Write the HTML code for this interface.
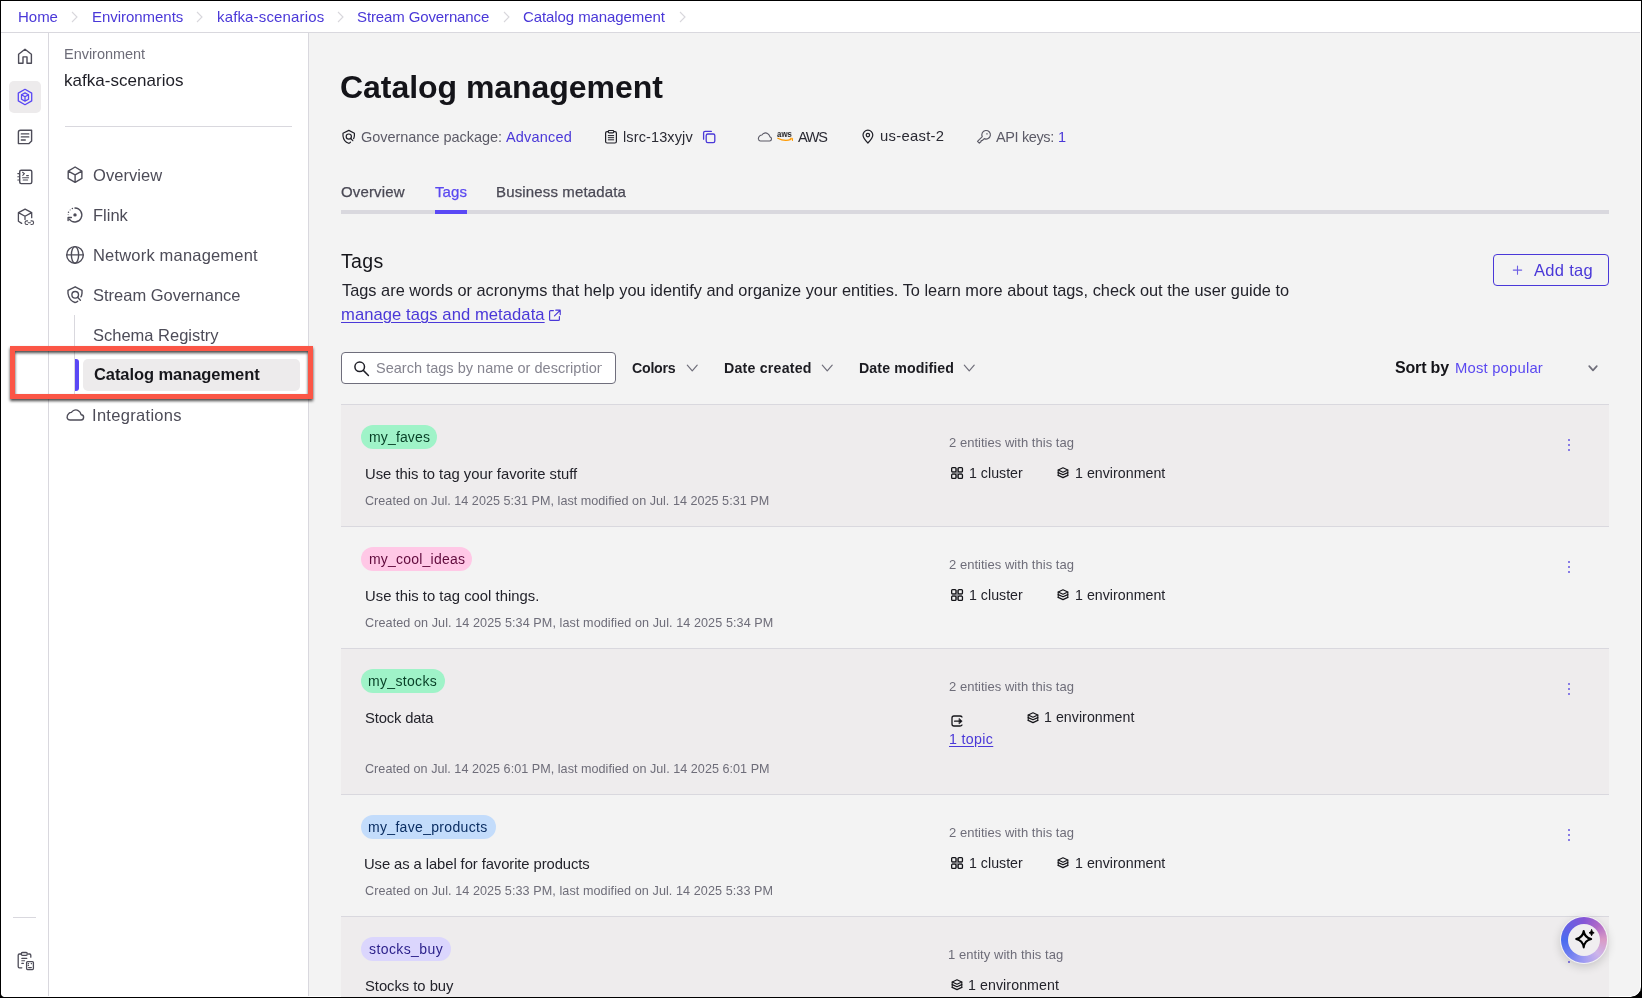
<!DOCTYPE html>
<html><head><meta charset="utf-8"><style>
*{box-sizing:border-box;margin:0;padding:0}
html,body{width:1642px;height:998px;overflow:hidden;background:#000}
body{font-family:"Liberation Sans",sans-serif;position:relative}
.t{position:absolute;white-space:nowrap;will-change:transform}
.b{position:absolute}
svg{position:absolute;overflow:visible}
</style></head><body>
<div class="b" style="left:1px;top:1px;width:1640px;height:996px;background:#fff;border-radius:0 0 10px 3px;overflow:hidden"></div><div class="b" style="left:309px;top:33px;width:1331px;height:963px;background:#f3f3f3;border-bottom-right-radius:9px"></div><div class="b" style="left:1px;top:32px;width:1639px;height:1px;background:#d9d8de"></div><div class="b" style="left:48px;top:33px;width:1px;height:963px;background:#d9d8de"></div><div class="b" style="left:308px;top:33px;width:1px;height:963px;background:#d9d8de"></div><div class="t" style="left:18.25px;top:8.62px;font-size:15px;line-height:16.755px;color:#4a38d8;font-weight:400;letter-spacing:-0.017px;">Home</div>
<div class="t" style="left:91.55px;top:8.62px;font-size:15px;line-height:16.755px;color:#4a38d8;font-weight:400;letter-spacing:-0.036px;">Environments</div>
<div class="t" style="left:216.50px;top:8.62px;font-size:15px;line-height:16.755px;color:#4a38d8;font-weight:400;letter-spacing:0.150px;">kafka-scenarios</div>
<div class="t" style="left:357.45px;top:8.62px;font-size:15px;line-height:16.755px;color:#4a38d8;font-weight:400;letter-spacing:-0.122px;">Stream Governance</div>
<div class="t" style="left:523.45px;top:8.62px;font-size:15px;line-height:16.755px;color:#4a38d8;font-weight:400;letter-spacing:-0.088px;">Catalog management</div>
<svg style="left:71px;top:11.2px" width="7" height="12" viewBox="0 0 7 12"><path d="M1 1 L6 6 L1 11" fill="none" stroke="#d8d7dc" stroke-width="1.1"/></svg><svg style="left:196px;top:11.2px" width="7" height="12" viewBox="0 0 7 12"><path d="M1 1 L6 6 L1 11" fill="none" stroke="#d8d7dc" stroke-width="1.1"/></svg><svg style="left:337px;top:11.2px" width="7" height="12" viewBox="0 0 7 12"><path d="M1 1 L6 6 L1 11" fill="none" stroke="#d8d7dc" stroke-width="1.1"/></svg><svg style="left:503px;top:11.2px" width="7" height="12" viewBox="0 0 7 12"><path d="M1 1 L6 6 L1 11" fill="none" stroke="#d8d7dc" stroke-width="1.1"/></svg><svg style="left:679px;top:11.2px" width="7" height="12" viewBox="0 0 7 12"><path d="M1 1 L6 6 L1 11" fill="none" stroke="#d8d7dc" stroke-width="1.1"/></svg><div class="b" style="left:9px;top:81px;width:32px;height:32px;border-radius:5px;background:#edebec"></div><svg style="left:10px;top:40px" width="30" height="30" viewBox="10 40 30 30" fill="none" stroke-linecap="round" stroke-linejoin="round"><path d="M18.6 63.2 V54.3 L25 49.2 L31.4 54.3 V63.2 H27 V56.9 H23 V63.2 Z" stroke="#4d4c58" stroke-width="1.4"/></svg>
<svg style="left:10px;top:82px" width="30" height="30" viewBox="10 82 30 30" fill="none" stroke-linecap="round" stroke-linejoin="round"><path d="M25 89.3 L31.7 93.1 V100.9 L25 104.7 L18.3 100.9 V93.1 Z" stroke="#5a48f5" stroke-width="1.3"/><path d="M25 92.9 L28.5 94.8 V99.2 L25 101.1 L21.5 99.2 V94.8 Z M21.5 94.8 L25 96.8 L28.5 94.8 M25 96.8 V101" stroke="#5a48f5" stroke-width="1.3"/></svg>
<svg style="left:10px;top:120px" width="30" height="30" viewBox="10 120 30 30" fill="none" stroke-linecap="round" stroke-linejoin="round"><path d="M20.5 130.2 H31.6 V141 L29 143.6 H18.4 V132.3 Q18.4 130.2 20.5 130.2 Z" stroke="#4d4c58" stroke-width="1.4"/><path d="M21.3 133.9 H28.8 M21.3 136.9 H28.8 M21.3 140 H25.3" stroke="#4d4c58" stroke-width="1.3"/></svg>
<svg style="left:10px;top:160px" width="30" height="30" viewBox="10 160 30 30" fill="none" stroke-linecap="round" stroke-linejoin="round"><rect x="19.7" y="170.2" width="12.1" height="13.4" rx="1.5" stroke="#4d4c58" stroke-width="1.4"/><path d="M17.8 173.6 H19.6 M17.8 176.8 H19.6 M17.8 180 H19.6" stroke="#4d4c58" stroke-width="1.1"/><path d="M22.6 172.3 L24.4 173.7 L22.8 175.3 M26.6 175.6 H28.4 M22.6 177.7 H28.6 M23.2 180 H27.6" stroke="#4d4c58" stroke-width="1.1"/></svg>
<svg style="left:10px;top:200px" width="30" height="30" viewBox="10 200 30 30" fill="none" stroke-linecap="round" stroke-linejoin="round"><path d="M18.4 212.6 L25.1 209.2 L31.7 212.6 L25 216.2 Z M18.4 212.6 V221.3 L21.7 223.4 M25 216.2 V219.4 M31.7 212.6 V217.7" stroke="#4d4c58" stroke-width="1.3"/><path d="M27.6 220.9 H26.8 A1.8 1.8 0 0 0 26.8 224.5 H27.6 M31 220.9 H31.8 A1.8 1.8 0 0 1 31.8 224.5 H31 M28.2 222.7 H30.4" stroke="#4d4c58" stroke-width="1.1"/></svg>
<div class="b" style="left:13px;top:917px;width:23px;height:1px;background:#d9d8de"></div><svg style="left:10px;top:945px" width="30" height="30" viewBox="10 945 30 30" fill="none" stroke-linecap="round" stroke-linejoin="round"><path d="M21.2 954 H19.4 Q18.2 954 18.2 955.3 V966.6 Q18.2 967.8 19.4 967.8 H21.8 M28.5 954 H29.6 Q30.8 954 30.8 955.3 V957.2" stroke="#4d4c58" stroke-width="1.3"/><rect x="21.3" y="952.5" width="6" height="2.8" rx="1.2" stroke="#4d4c58" stroke-width="1.3"/><path d="M21.8 958.4 H26.8 M21.8 960.8 H24.6 M21.8 963.4 H23.4" stroke="#4d4c58" stroke-width="1.1"/><rect x="26.6" y="961.6" width="6.8" height="8" rx="1" stroke="#4d4c58" stroke-width="1.3"/><path d="M28.2 963.6 H28.6 M31.2 963.6 H31.6 M28.2 965.4 H28.6 M28.6 967.6 H31.4" stroke="#4d4c58" stroke-width="1.1"/></svg>
<div class="t" style="left:64.15px;top:45.88px;font-size:14.5px;line-height:16.197px;color:#6e6d79;font-weight:400;letter-spacing:-0.030px;">Environment</div>
<div class="t" style="left:64.40px;top:71.11px;font-size:17px;line-height:18.989px;color:#1f1f27;font-weight:400;letter-spacing:0.029px;">kafka-scenarios</div>
<div class="b" style="left:65px;top:126px;width:227px;height:1px;background:#d9d8de"></div><div class="t" style="left:93.05px;top:165.87px;font-size:16.5px;line-height:18.430px;color:#4d4c58;font-weight:400;letter-spacing:0.043px;">Overview</div>
<div class="t" style="left:93.30px;top:205.87px;font-size:16.5px;line-height:18.430px;color:#4d4c58;font-weight:400;">Flink</div>
<div class="t" style="left:92.55px;top:245.87px;font-size:16.5px;line-height:18.430px;color:#4d4c58;font-weight:400;letter-spacing:0.188px;">Network management</div>
<div class="t" style="left:93.05px;top:285.77px;font-size:16.5px;line-height:18.430px;color:#4d4c58;font-weight:400;letter-spacing:-0.009px;">Stream Governance</div>
<div class="t" style="left:93.05px;top:325.67px;font-size:16.5px;line-height:18.430px;color:#4d4c58;font-weight:400;letter-spacing:-0.004px;">Schema Registry</div>
<div class="t" style="left:92.30px;top:405.57px;font-size:16.5px;line-height:18.430px;color:#4d4c58;font-weight:400;letter-spacing:0.305px;">Integrations</div>
<div class="b" style="left:74px;top:315px;width:1px;height:79px;background:#d9d8de"></div><div class="b" style="left:83px;top:359px;width:217px;height:31.5px;border-radius:5px;background:#edebec"></div><div class="b" style="left:74.5px;top:359px;width:4.5px;height:31.5px;border-radius:0 3px 3px 0;background:#5a48f5"></div><div class="t" style="left:93.55px;top:365.07px;font-size:16.5px;line-height:18.430px;color:#17171c;font-weight:700;letter-spacing:-0.071px;">Catalog management</div>
<svg style="left:60px;top:160px" width="30" height="30" viewBox="60 160 30 30" fill="none" stroke-linecap="round" stroke-linejoin="round"><path d="M75.1 167 L81.9 171.2 V178.4 L75.1 182.4 L68.2 178.4 V171.2 Z M68.2 171.2 L75.1 174.8 L81.9 171.2 M75.1 174.8 V182.3" stroke="#4d4c58" stroke-width="1.4"/></svg>
<svg style="left:60px;top:200px" width="30" height="30" viewBox="60 200 30 30" fill="none" stroke-linecap="round" stroke-linejoin="round"><path d="M75 208 A7 7 0 1 1 69.2 219.2" stroke="#4d4c58" stroke-width="1.4"/><path d="M68.1 217.5 H71.4 M68.1 217.5 V220.6" stroke="#4d4c58" stroke-width="1.4"/><circle cx="75" cy="214.9" r="1.7" fill="#4d4c58" stroke="none"/><circle cx="72.4" cy="208.4" r="0.75" fill="#4d4c58" stroke="none"/><circle cx="70.2" cy="209.9" r="0.7" fill="#4d4c58" stroke="none" opacity=".6"/><circle cx="68.5" cy="212.3" r="0.75" fill="#4d4c58" stroke="none"/><circle cx="68.2" cy="214.6" r="0.7" fill="#4d4c58" stroke="none" opacity=".6"/></svg>
<svg style="left:60px;top:240px" width="30" height="30" viewBox="60 240 30 30" fill="none" stroke-linecap="round" stroke-linejoin="round"><circle cx="75" cy="254.9" r="8.3" stroke="#4d4c58" stroke-width="1.4"/><ellipse cx="75" cy="254.9" rx="3.6" ry="8.3" stroke="#4d4c58" stroke-width="1.4"/><path d="M66.8 254.9 H83.2" stroke="#4d4c58" stroke-width="1.4"/></svg>
<svg style="left:60px;top:280px" width="30" height="30" viewBox="60 280 30 30" fill="none" stroke-linecap="round" stroke-linejoin="round"><path d="M77.7 301.2 Q76.6 302.4 75 302.5 Q69 300.5 68 293.5 V290.3 L75.2 286.8 L82 290.3 V293.2 Q81.8 295.6 80.9 296.8" stroke="#4d4c58" stroke-width="1.4"/><circle cx="75.2" cy="294.8" r="3.3" stroke="#4d4c58" stroke-width="1.4"/><path d="M77.6 297.3 L80.4 300.2" stroke="#4d4c58" stroke-width="1.4"/></svg>
<svg style="left:60px;top:400px" width="30" height="30" viewBox="60 400 30 30" fill="none" stroke-linecap="round" stroke-linejoin="round"><path d="M70.2 420 H80.8 A2.6 2.6 0 0 0 81.2 414.8 Q80.3 411.6 78.2 410.6 Q76 409.2 73.5 410.5 Q72.3 411.3 71.4 412.4 Q69.8 412.4 68.8 413.5 Q66.8 415.3 67.1 417.6 Q67.7 420 70.2 420 Z" stroke="#4d4c58" stroke-width="1.4"/></svg>
<div class="b" style="left:10.4px;top:345.8px;width:302.6px;height:53.2px;border:5.1px solid #fb5646;filter:drop-shadow(0 2.8px 1.5px rgba(0,0,0,.72))"></div><div class="t" style="left:340.45px;top:69.84px;font-size:32px;line-height:35.744px;color:#141419;font-weight:700;letter-spacing:-0.041px;">Catalog management</div>
<svg style="left:338px;top:126px" width="20" height="20" viewBox="338 126 20 20" fill="none" stroke-linecap="round" stroke-linejoin="round"><path d="M350.5 142.2 Q349.7 143.3 348.7 143.3 Q343.6 141.6 343 136 V133.2 L348.8 130.4 L354.4 133.2 V135.8 Q354.2 137.6 353.6 138.6" stroke="#1f1f27" stroke-width="1.2"/><circle cx="348.8" cy="136.6" r="2.6" stroke="#1f1f27" stroke-width="1.2"/><path d="M350.7 138.5 L352.8 140.7" stroke="#1f1f27" stroke-width="1.2"/></svg>
<div class="t" style="left:360.85px;top:128.68px;font-size:14.5px;line-height:16.197px;color:#5c5b67;font-weight:400;letter-spacing:-0.042px;">Governance package:</div>
<div class="t" style="left:505.70px;top:128.68px;font-size:14.5px;line-height:16.197px;color:#4a38d8;font-weight:400;letter-spacing:0.186px;">Advanced</div>
<svg style="left:600px;top:126px" width="20" height="20" viewBox="600 126 20 20" fill="none" stroke-linecap="round" stroke-linejoin="round"><rect x="605.6" y="131.6" width="10.8" height="11.4" rx="1.5" stroke="#1f1f27" stroke-width="1.2"/><rect x="608.3" y="130.5" width="5.4" height="2.4" rx=".8" fill="#f3f3f3" stroke="#1f1f27" stroke-width="1.1"/><path d="M608.3 135.6 H613.7 M608.3 137.7 H613.7 M608.3 139.8 H613.7" stroke="#1f1f27" stroke-width="1"/></svg>
<div class="t" style="left:623.00px;top:128.68px;font-size:14.5px;line-height:16.197px;color:#2a2a33;font-weight:400;letter-spacing:0.120px;">lsrc-13xyjv</div>
<svg style="left:700px;top:126px" width="20" height="20" viewBox="700 126 20 20" fill="none" stroke-linecap="round" stroke-linejoin="round"><rect x="706.2" y="134" width="8.6" height="8.6" rx="1.6" stroke="#4a38d8" stroke-width="1.3"/><path d="M703.6 139.2 V132.8 Q703.6 131.3 705.1 131.3 H711.4" stroke="#4a38d8" stroke-width="1.3"/></svg>
<svg style="left:752px;top:126px" width="25" height="20" viewBox="752 126 25 20" fill="none" stroke-linecap="round" stroke-linejoin="round"><path d="M760.4 141 H769.6 A2.1 2.1 0 0 0 770 136.9 Q769.3 134.4 767.5 133.5 Q765.6 132.4 763.6 133.4 Q762.6 134.1 761.9 135 Q760.6 135 759.7 135.9 Q758.1 137.4 758.4 139.2 Q758.9 141 760.4 141 Z" stroke="#5c5b67" stroke-width="1.1"/></svg>
<div class="t" style="left:777px;top:129px;font-size:9.8px;line-height:10px;color:#1b1b1f;font-weight:700;transform:scaleX(.8);transform-origin:0 0">aws</div><svg style="left:776px;top:136px" width="20" height="8" viewBox="776 136 20 8" fill="none" stroke-linecap="round" stroke-linejoin="round"><path d="M777.8 138.2 Q784.5 141.8 791 139.4" stroke="#ff9a00" stroke-width="1.2"/><path d="M790.2 138.3 L792.6 138.3 L792.4 140.6" stroke="#ff9a00" stroke-width="1"/></svg>
<div class="t" style="left:798.10px;top:128.68px;font-size:14.5px;line-height:16.197px;color:#2a2a33;font-weight:400;letter-spacing:-1.275px;">AWS</div>
<svg style="left:858px;top:126px" width="20" height="20" viewBox="858 126 20 20" fill="none" stroke-linecap="round" stroke-linejoin="round"><path d="M867.9 143 Q863 138.3 863 135.1 A4.9 4.9 0 0 1 872.8 135.1 Q872.8 138.3 867.9 143 Z" stroke="#1f1f27" stroke-width="1.2"/><circle cx="867.9" cy="135.1" r="1.7" stroke="#1f1f27" stroke-width="1.2"/></svg>
<div class="t" style="left:879.60px;top:128.41px;font-size:14.8px;line-height:16.532px;color:#2a2a33;font-weight:400;letter-spacing:0.300px;">us-east-2</div>
<svg style="left:972px;top:126px" width="22" height="22" viewBox="972 126 22 22" fill="none" stroke-linecap="round" stroke-linejoin="round"><path d="M984.25 138.63 A4.3 4.3 0 1 0 982.27 136.65 L977.5 141.4 L979.3 143.2 L981.1 141.5 L981.2 140.6 L982.3 140.5 Z" stroke="#5c5b67" stroke-width="1.15"/><rect x="986.3" y="133.2" width="1.3" height="1.3" fill="#5c5b67" stroke="none"/></svg>
<div class="t" style="left:996.30px;top:128.68px;font-size:14.5px;line-height:16.197px;color:#5c5b67;font-weight:400;letter-spacing:-0.375px;">API keys:</div>
<div class="t" style="left:1057.90px;top:128.68px;font-size:14.5px;line-height:16.197px;color:#4a38d8;font-weight:400;letter-spacing:0.000px;">1</div>
<div class="t" style="left:340.65px;top:184.43px;font-size:15px;line-height:16.755px;color:#4a4955;font-weight:400;letter-spacing:0.150px;-webkit-text-stroke:.25px #4a4955">Overview</div>
<div class="t" style="left:435.15px;top:184.43px;font-size:15px;line-height:16.755px;color:#5a48f0;font-weight:400;letter-spacing:0.067px;-webkit-text-stroke:.25px #5a48f0">Tags</div>
<div class="t" style="left:496.15px;top:184.43px;font-size:15px;line-height:16.755px;color:#4a4955;font-weight:400;letter-spacing:0.147px;-webkit-text-stroke:.25px #4a4955">Business metadata</div>
<div class="b" style="left:341px;top:210px;width:1268px;height:4px;background:#d9d8de"></div><div class="b" style="left:435px;top:209.6px;width:32.2px;height:4px;background:#5a48f5"></div><div class="t" style="left:341.40px;top:251.15px;font-size:19.5px;line-height:21.782px;color:#141419;font-weight:400;letter-spacing:0.367px;">Tags</div>
<div class="t" style="left:341.65px;top:281.42px;font-size:16.33px;line-height:18.241px;color:#23232b;font-weight:400;letter-spacing:0.012px;">Tags are words or acronyms that help you identify and organize your entities. To learn more about tags, check out the user guide to</div>
<div class="t" style="left:340.50px;top:306.28px;font-size:16.6px;line-height:18.542px;color:#4a38d8;font-weight:400;letter-spacing:0.067px;text-decoration:underline;text-underline-offset:2px;text-decoration-thickness:1px">manage tags and metadata</div>
<svg style="left:546px;top:306px" width="18" height="18" viewBox="546 306 18 18" fill="none" stroke-linecap="round" stroke-linejoin="round"><path d="M553.4 310.6 H550.6 Q549.6 310.6 549.6 311.6 V319.4 Q549.6 320.4 550.6 320.4 H558.4 Q559.4 320.4 559.4 319.4 V316.6 M555.8 310.2 H560.2 V314.6 M560 310.4 L554.5 315.9" stroke="#4a38d8" stroke-width="1.2"/></svg>
<div class="b" style="left:1493px;top:254px;width:116px;height:32px;border:1.3px solid #4a38d8;border-radius:4px"></div><svg style="left:1510px;top:262px" width="16" height="16" viewBox="1510 262 16 16" fill="none" stroke-linecap="round" stroke-linejoin="round"><path d="M1517.5 266 V274.3 M1513.3 270.1 H1521.7" stroke="#6e60e4" stroke-width="1.1"/></svg>
<div class="t" style="left:1534.00px;top:261.07px;font-size:16.5px;line-height:18.430px;color:#4a38d8;font-weight:400;letter-spacing:0.308px;">Add tag</div>
<div class="b" style="left:341px;top:352px;width:275px;height:32px;border:1.2px solid #6f6e7c;border-radius:4px;background:#fff"></div><svg style="left:350px;top:358px" width="22" height="22" viewBox="350 358 22 22" fill="none" stroke-linecap="round" stroke-linejoin="round"><circle cx="359.7" cy="366.8" r="4.8" stroke="#1f1f27" stroke-width="1.5"/><path d="M363.3 370.4 L368.4 375.5" stroke="#1f1f27" stroke-width="1.5"/></svg>
<div class="b" style="left:376px;top:356px;width:225.5px;height:24px;overflow:hidden"><div class="t" style="left:-0.05px;top:4.18px;font-size:14.5px;line-height:16.197px;color:#85848f;font-weight:400;letter-spacing:0.024px;">Search tags by name or description</div>
</div><div class="t" style="left:632.20px;top:361.15px;font-size:14.2px;line-height:15.861px;color:#1c1c22;font-weight:700;letter-spacing:-0.260px;">Colors</div>
<div class="t" style="left:723.80px;top:361.15px;font-size:14.2px;line-height:15.861px;color:#1c1c22;font-weight:700;letter-spacing:0.205px;">Date created</div>
<div class="t" style="left:858.60px;top:361.15px;font-size:14.2px;line-height:15.861px;color:#1c1c22;font-weight:700;letter-spacing:0.100px;">Date modified</div>
<svg style="left:684.8px;top:360px" width="16" height="14" viewBox="684.8 360 16 14" fill="none" stroke-linecap="round" stroke-linejoin="round"><path d="M687.0999999999999 365.2 L692.05 370.8 L697.0 365.2" stroke="#6f6e7a" stroke-width="1.2"/></svg>
<svg style="left:819.9px;top:360px" width="16" height="14" viewBox="819.9 360 16 14" fill="none" stroke-linecap="round" stroke-linejoin="round"><path d="M822.1999999999999 365.2 L827.15 370.8 L832.1 365.2" stroke="#6f6e7a" stroke-width="1.2"/></svg>
<svg style="left:961.7px;top:360px" width="16" height="14" viewBox="961.7 360 16 14" fill="none" stroke-linecap="round" stroke-linejoin="round"><path d="M964.0 365.2 L968.95 370.8 L973.9000000000001 365.2" stroke="#6f6e7a" stroke-width="1.2"/></svg>
<div class="t" style="left:1395.40px;top:359.22px;font-size:16px;line-height:17.872px;color:#141419;font-weight:700;letter-spacing:-0.167px;">Sort by</div>
<div class="t" style="left:1455.15px;top:360.31px;font-size:14.8px;line-height:16.532px;color:#5a48f0;font-weight:400;letter-spacing:0.200px;">Most popular</div>
<svg style="left:1584px;top:360px" width="18" height="14" viewBox="1584 360 18 14" fill="none" stroke-linecap="round" stroke-linejoin="round"><path d="M1589.2 366.2 L1593 370.3 L1596.8 366.2" stroke="#6f6e7a" stroke-width="1.7"/></svg>
<div class="b" style="left:341px;top:404px;width:1268px;height:122px;background:#eeeced;border-top:1px solid #d9d8de"></div><div class="b" style="left:361px;top:425px;width:76px;height:24px;border-radius:12px;background:#9ff3c8"></div><div class="t" style="left:368.50px;top:429.73px;font-size:14px;line-height:15.638px;color:#073f26;font-weight:400;letter-spacing:0.143px;">my_faves</div>
<div class="t" style="left:364.50px;top:465.61px;font-size:14.8px;line-height:16.532px;color:#23232b;font-weight:400;letter-spacing:0.009px;">Use this to tag your favorite stuff</div>
<div class="t" style="left:364.75px;top:494.10px;font-size:12.6px;line-height:14.074px;color:#6e6d79;font-weight:400;letter-spacing:0.023px;">Created on Jul. 14 2025 5:31 PM, last modified on Jul. 14 2025 5:31 PM</div>
<div class="t" style="left:949.15px;top:436.34px;font-size:13px;line-height:14.521px;color:#6e6d79;font-weight:400;letter-spacing:0.028px;">2 entities with this tag</div>
<svg style="left:949px;top:465.2px" width="16" height="16" viewBox="949 465.2 16 16" fill="none" stroke-linecap="round" stroke-linejoin="round"><path d="M957 468.7 V477.7 M952.5 473.2 H961.5" stroke="#8e8e92" stroke-width="1.6"/><rect x="951.65" y="467.84999999999997" width="4.3" height="4.3" rx="0.9" stroke="#141419" stroke-width="1.3"/><rect x="958.15" y="467.84999999999997" width="4.3" height="4.3" rx="0.9" stroke="#141419" stroke-width="1.3"/><rect x="951.65" y="474.34999999999997" width="4.3" height="4.3" rx="0.9" stroke="#141419" stroke-width="1.3"/><rect x="958.15" y="474.34999999999997" width="4.3" height="4.3" rx="0.9" stroke="#141419" stroke-width="1.3"/></svg>
<div class="t" style="left:969.00px;top:465.95px;font-size:14.2px;line-height:15.861px;color:#23232b;font-weight:400;letter-spacing:0.013px;">1 cluster</div>
<svg style="left:1055px;top:464.6px" width="16" height="16" viewBox="1055 464.6 16 16" fill="none" stroke-linecap="round" stroke-linejoin="round"><path d="M1063 467.40000000000003 L1067.8 469.6 L1063 471.8 L1058.2 469.6 Z" stroke="#141419" stroke-width="1.2"/><path d="M1058.2 472.20000000000005 L1063 474.40000000000003 L1067.8 472.20000000000005 M1058.2 475.0 L1063 477.20000000000005 L1067.8 475.0" stroke="#141419" stroke-width="1.2"/><path d="M1058.2 469.6 V475.0 M1067.8 469.6 V475.0" stroke="#141419" stroke-width="1.1"/></svg>
<div class="t" style="left:1074.60px;top:465.95px;font-size:14.2px;line-height:15.861px;color:#23232b;font-weight:400;letter-spacing:0.033px;">1 environment</div>
<div class="b" style="left:1568px;top:439px;width:2px;height:2px;background:#887ce6"></div><div class="b" style="left:1568px;top:444px;width:2px;height:2px;background:#887ce6"></div><div class="b" style="left:1568px;top:449px;width:2px;height:2px;background:#887ce6"></div><div class="b" style="left:341px;top:526px;width:1268px;height:122px;background:#f3f3f3;border-top:1px solid #d9d8de"></div><div class="b" style="left:361px;top:547px;width:111px;height:24px;border-radius:12px;background:#ffc8e6"></div><div class="t" style="left:368.50px;top:551.73px;font-size:14px;line-height:15.638px;color:#600a3c;font-weight:400;letter-spacing:0.208px;">my_cool_ideas</div>
<div class="t" style="left:364.50px;top:587.61px;font-size:14.8px;line-height:16.532px;color:#23232b;font-weight:400;letter-spacing:0.028px;">Use this to tag cool things.</div>
<div class="t" style="left:364.75px;top:616.10px;font-size:12.6px;line-height:14.074px;color:#6e6d79;font-weight:400;letter-spacing:0.083px;">Created on Jul. 14 2025 5:34 PM, last modified on Jul. 14 2025 5:34 PM</div>
<div class="t" style="left:949.15px;top:558.34px;font-size:13px;line-height:14.521px;color:#6e6d79;font-weight:400;letter-spacing:0.028px;">2 entities with this tag</div>
<svg style="left:949px;top:587.2px" width="16" height="16" viewBox="949 587.2 16 16" fill="none" stroke-linecap="round" stroke-linejoin="round"><path d="M957 590.7 V599.7 M952.5 595.2 H961.5" stroke="#8e8e92" stroke-width="1.6"/><rect x="951.65" y="589.85" width="4.3" height="4.3" rx="0.9" stroke="#141419" stroke-width="1.3"/><rect x="958.15" y="589.85" width="4.3" height="4.3" rx="0.9" stroke="#141419" stroke-width="1.3"/><rect x="951.65" y="596.35" width="4.3" height="4.3" rx="0.9" stroke="#141419" stroke-width="1.3"/><rect x="958.15" y="596.35" width="4.3" height="4.3" rx="0.9" stroke="#141419" stroke-width="1.3"/></svg>
<div class="t" style="left:969.00px;top:587.95px;font-size:14.2px;line-height:15.861px;color:#23232b;font-weight:400;letter-spacing:0.013px;">1 cluster</div>
<svg style="left:1055px;top:586.6px" width="16" height="16" viewBox="1055 586.6 16 16" fill="none" stroke-linecap="round" stroke-linejoin="round"><path d="M1063 589.4 L1067.8 591.6 L1063 593.8000000000001 L1058.2 591.6 Z" stroke="#141419" stroke-width="1.2"/><path d="M1058.2 594.2 L1063 596.4 L1067.8 594.2 M1058.2 597.0 L1063 599.2 L1067.8 597.0" stroke="#141419" stroke-width="1.2"/><path d="M1058.2 591.6 V597.0 M1067.8 591.6 V597.0" stroke="#141419" stroke-width="1.1"/></svg>
<div class="t" style="left:1074.60px;top:587.95px;font-size:14.2px;line-height:15.861px;color:#23232b;font-weight:400;letter-spacing:0.033px;">1 environment</div>
<div class="b" style="left:1568px;top:561px;width:2px;height:2px;background:#887ce6"></div><div class="b" style="left:1568px;top:566px;width:2px;height:2px;background:#887ce6"></div><div class="b" style="left:1568px;top:571px;width:2px;height:2px;background:#887ce6"></div><div class="b" style="left:341px;top:648px;width:1268px;height:146px;background:#eeeced;border-top:1px solid #d9d8de"></div><div class="b" style="left:361px;top:669px;width:84px;height:24px;border-radius:12px;background:#9ff3c8"></div><div class="t" style="left:368.30px;top:673.73px;font-size:14px;line-height:15.638px;color:#073f26;font-weight:400;letter-spacing:0.331px;">my_stocks</div>
<div class="t" style="left:364.95px;top:709.61px;font-size:14.8px;line-height:16.532px;color:#23232b;font-weight:400;letter-spacing:-0.161px;">Stock data</div>
<div class="t" style="left:364.75px;top:762.10px;font-size:12.6px;line-height:14.074px;color:#6e6d79;font-weight:400;letter-spacing:0.029px;">Created on Jul. 14 2025 6:01 PM, last modified on Jul. 14 2025 6:01 PM</div>
<div class="t" style="left:949.15px;top:680.34px;font-size:13px;line-height:14.521px;color:#6e6d79;font-weight:400;letter-spacing:0.028px;">2 entities with this tag</div>
<svg style="left:949px;top:713px" width="16" height="16" viewBox="949 713 16 16" fill="none" stroke-linecap="round" stroke-linejoin="round"><path d="M962 717 Q961.4 716 960 716 H954 Q952 716 952 718 V724 Q952 726 954 726 H960 Q961.4 726 962 725" stroke="#141419" stroke-width="1.3"/><path d="M954.6 721.2 H960.5" stroke="#141419" stroke-width="1.3"/><path d="M959.3 718.6 L962.2 721.2 L959.3 723.8 Z" fill="#141419" stroke="#141419" stroke-width=".6"/></svg>
<div class="t" style="left:948.60px;top:731.65px;font-size:14.2px;line-height:15.861px;color:#4a38d8;font-weight:400;letter-spacing:0.350px;text-decoration:underline;text-underline-offset:2px">1 topic</div>
<svg style="left:1025px;top:710px" width="16" height="16" viewBox="1025 710 16 16" fill="none" stroke-linecap="round" stroke-linejoin="round"><path d="M1033 712.8 L1037.8 715 L1033 717.2 L1028.2 715 Z" stroke="#141419" stroke-width="1.2"/><path d="M1028.2 717.6 L1033 719.8 L1037.8 717.6 M1028.2 720.4 L1033 722.6 L1037.8 720.4" stroke="#141419" stroke-width="1.2"/><path d="M1028.2 715 V720.4 M1037.8 715 V720.4" stroke="#141419" stroke-width="1.1"/></svg>
<div class="t" style="left:1043.90px;top:709.85px;font-size:14.2px;line-height:15.861px;color:#23232b;font-weight:400;letter-spacing:0.042px;">1 environment</div>
<div class="b" style="left:1568px;top:683px;width:2px;height:2px;background:#887ce6"></div><div class="b" style="left:1568px;top:688px;width:2px;height:2px;background:#887ce6"></div><div class="b" style="left:1568px;top:693px;width:2px;height:2px;background:#887ce6"></div><div class="b" style="left:341px;top:794px;width:1268px;height:122px;background:#f3f3f3;border-top:1px solid #d9d8de"></div><div class="b" style="left:361px;top:815px;width:135px;height:24px;border-radius:12px;background:#c3dcfb"></div><div class="t" style="left:368.40px;top:819.73px;font-size:14px;line-height:15.638px;color:#0b2e63;font-weight:400;letter-spacing:0.320px;">my_fave_products</div>
<div class="t" style="left:364.30px;top:855.61px;font-size:14.8px;line-height:16.532px;color:#23232b;font-weight:400;letter-spacing:-0.084px;">Use as a label for favorite products</div>
<div class="t" style="left:364.75px;top:884.10px;font-size:12.6px;line-height:14.074px;color:#6e6d79;font-weight:400;letter-spacing:0.080px;">Created on Jul. 14 2025 5:33 PM, last modified on Jul. 14 2025 5:33 PM</div>
<div class="t" style="left:949.15px;top:826.34px;font-size:13px;line-height:14.521px;color:#6e6d79;font-weight:400;letter-spacing:0.028px;">2 entities with this tag</div>
<svg style="left:949px;top:855.2px" width="16" height="16" viewBox="949 855.2 16 16" fill="none" stroke-linecap="round" stroke-linejoin="round"><path d="M957 858.7 V867.7 M952.5 863.2 H961.5" stroke="#8e8e92" stroke-width="1.6"/><rect x="951.65" y="857.85" width="4.3" height="4.3" rx="0.9" stroke="#141419" stroke-width="1.3"/><rect x="958.15" y="857.85" width="4.3" height="4.3" rx="0.9" stroke="#141419" stroke-width="1.3"/><rect x="951.65" y="864.35" width="4.3" height="4.3" rx="0.9" stroke="#141419" stroke-width="1.3"/><rect x="958.15" y="864.35" width="4.3" height="4.3" rx="0.9" stroke="#141419" stroke-width="1.3"/></svg>
<div class="t" style="left:969.00px;top:855.95px;font-size:14.2px;line-height:15.861px;color:#23232b;font-weight:400;letter-spacing:0.013px;">1 cluster</div>
<svg style="left:1055px;top:854.6px" width="16" height="16" viewBox="1055 854.6 16 16" fill="none" stroke-linecap="round" stroke-linejoin="round"><path d="M1063 857.4 L1067.8 859.6 L1063 861.8000000000001 L1058.2 859.6 Z" stroke="#141419" stroke-width="1.2"/><path d="M1058.2 862.2 L1063 864.4 L1067.8 862.2 M1058.2 865.0 L1063 867.2 L1067.8 865.0" stroke="#141419" stroke-width="1.2"/><path d="M1058.2 859.6 V865.0 M1067.8 859.6 V865.0" stroke="#141419" stroke-width="1.1"/></svg>
<div class="t" style="left:1074.60px;top:855.95px;font-size:14.2px;line-height:15.861px;color:#23232b;font-weight:400;letter-spacing:0.033px;">1 environment</div>
<div class="b" style="left:1568px;top:829px;width:2px;height:2px;background:#887ce6"></div><div class="b" style="left:1568px;top:834px;width:2px;height:2px;background:#887ce6"></div><div class="b" style="left:1568px;top:839px;width:2px;height:2px;background:#887ce6"></div><div class="b" style="left:341px;top:916px;width:1268px;height:122px;background:#eeeced;border-top:1px solid #d9d8de"></div><div class="b" style="left:361px;top:937px;width:90px;height:24px;border-radius:12px;background:#dbd6fd"></div><div class="t" style="left:369.10px;top:941.73px;font-size:14px;line-height:15.638px;color:#2a1f8a;font-weight:400;letter-spacing:0.400px;">stocks_buy</div>
<div class="t" style="left:364.55px;top:977.61px;font-size:14.8px;line-height:16.532px;color:#23232b;font-weight:400;letter-spacing:-0.033px;">Stocks to buy</div>
<div class="t" style="left:948.30px;top:948.34px;font-size:13px;line-height:14.521px;color:#6e6d79;font-weight:400;letter-spacing:0.050px;">1 entity with this tag</div>
<svg style="left:949px;top:976.6px" width="16" height="16" viewBox="949 976.6 16 16" fill="none" stroke-linecap="round" stroke-linejoin="round"><path d="M957 979.4 L961.8 981.6 L957 983.8000000000001 L952.2 981.6 Z" stroke="#141419" stroke-width="1.2"/><path d="M952.2 984.2 L957 986.4 L961.8 984.2 M952.2 987.0 L957 989.2 L961.8 987.0" stroke="#141419" stroke-width="1.2"/><path d="M952.2 981.6 V987.0 M961.8 981.6 V987.0" stroke="#141419" stroke-width="1.1"/></svg>
<div class="t" style="left:968.30px;top:977.95px;font-size:14.2px;line-height:15.861px;color:#23232b;font-weight:400;letter-spacing:0.083px;">1 environment</div>
<div class="b" style="left:1568px;top:951px;width:2px;height:2px;background:#887ce6"></div><div class="b" style="left:1568px;top:956px;width:2px;height:2px;background:#887ce6"></div><div class="b" style="left:1568px;top:961px;width:2px;height:2px;background:#887ce6"></div><div class="b" style="left:1559.8px;top:915.8px;width:48.5px;height:48.5px;border-radius:50%;background:#f3f2f3;box-shadow:0 3px 10px rgba(0,0,0,.16)"></div><div class="b" style="left:1561px;top:917px;width:46px;height:46px;border-radius:50%;background:conic-gradient(from 0deg,#8556d6,#b06ac8 45deg,#d99cc6 90deg,#cdb4ea 135deg,#a09cf2 180deg,#6f7ef0 225deg,#4a6cf0 270deg,#6a5fe2 315deg,#8556d6 360deg);"></div><div class="b" style="left:1568px;top:924px;width:32px;height:32px;border-radius:50%;background:#f0eef0"></div><svg style="left:1570px;top:924px" width="30" height="30" viewBox="1570 924 30 30" fill="none" stroke-linecap="round" stroke-linejoin="round"><path d="M1583.7 931 Q1584.6 937.6 1591.2 939 Q1584.6 940.4 1583.7 947.4 Q1582.8 940.4 1576.2 939 Q1582.8 937.6 1583.7 931 Z" fill="none" stroke="#000" stroke-width="2"/><path d="M1591.6 929.8 Q1592 932.2 1594.2 932.8 Q1592 933.3 1591.6 935.8 Q1591.2 933.3 1589 932.8 Q1591.2 932.2 1591.6 929.8 Z" fill="#000" stroke="#000" stroke-width=".8"/></svg>

<div class="b" style="left:1640px;top:33px;width:1px;height:963px;background:#fff"></div>
<div class="b" style="left:-20px;top:-20px;width:1682px;height:1038px;pointer-events:none;border-left:21px solid #000;border-top:21px solid #000;border-right:21px solid #000;border-bottom:21px solid #000;border-radius:0 0 31px 24px"></div>
</body></html>
